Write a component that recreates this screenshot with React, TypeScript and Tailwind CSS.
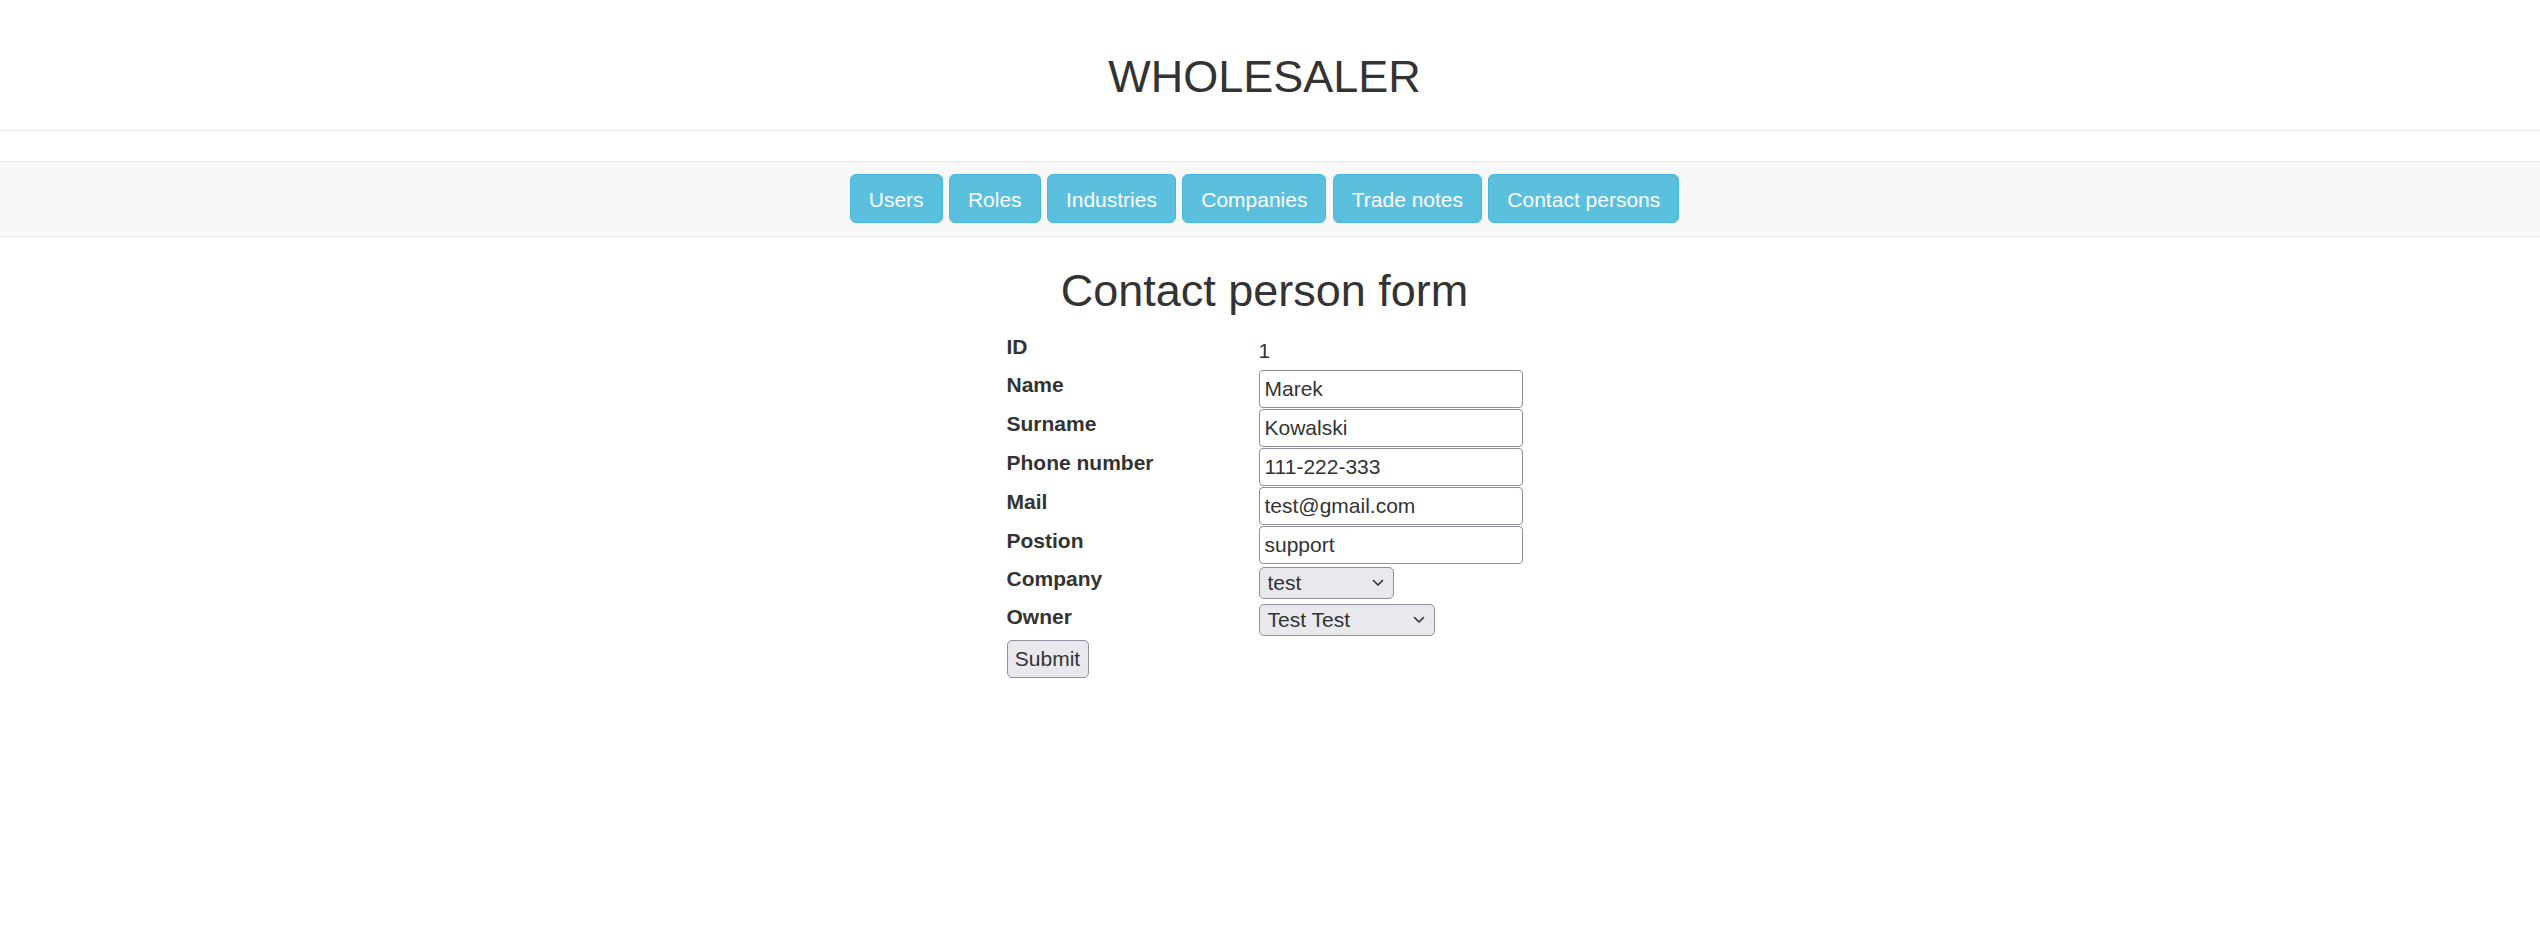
import { useState } from "react";

const navItems = ["Users", "Roles", "Industries", "Companies", "Trade notes", "Contact persons"];

const Chevron = () => (
  <svg width="12" height="8" viewBox="0 0 12 8" className="pointer-events-none absolute right-[10px] top-1/2 -translate-y-1/2">
    <path d="M1.5 1.5 L6 6 L10.5 1.5" fill="none" stroke="#333" strokeWidth="1.6" strokeLinecap="round" strokeLinejoin="round" />
  </svg>
);

const Row = ({ label, h, children }: { label: string; h: string; children: React.ReactNode }) => (
  <div className={`flex items-center ${h}`}>
    <div className="w-[252px] shrink-0">
      <label className="block font-bold leading-[30px] mb-[7.5px]">{label}</label>
    </div>
    <div className="flex-1">{children}</div>
  </div>
);

const App = () => {
  const [name, setName] = useState("Marek");
  const [surname, setSurname] = useState("Kowalski");
  const [phone, setPhone] = useState("111-222-333");
  const [mail, setMail] = useState("test@gmail.com");
  const [position, setPosition] = useState("support");
  const [company, setCompany] = useState("test");
  const [owner, setOwner] = useState("Test Test");

  const inputClass =
    "block w-[264px] h-[38px] px-[5px] text-[21px] leading-[30px] text-[#333] bg-white border border-[#8f8f9d] rounded-[4px] outline-none";

  return (
    <div className="min-h-screen bg-white text-[#333] text-[21px] font-['Liberation_Sans',Arial,sans-serif]">
      <header className="pt-[52px] pb-[28px] border-b border-[#eee] pr-[11px]">
        <h1 className="text-center text-[45px] leading-[50px] font-normal">WHOLESALER</h1>
      </header>

      <nav className="mt-[30px] border-y border-[#e7e7e7] bg-[#f8f8f8] h-[76px]">
        <div className="flex justify-center gap-[6.3px] pt-[12px] pr-[11px]">
          {navItems.map((item) => (
            <button
              key={item}
              className="h-[49px] px-[18px] pt-[2px] bg-[#5bc0de] border border-[#46b8da] rounded-[6px] text-white text-[21px] leading-[30px] cursor-pointer"
            >
              {item}
            </button>
          ))}
        </div>
      </nav>

      <main className="pr-[11px]">
        <h2 className="mt-[29px] mb-[16px] text-center text-[45px] leading-[49.5px] font-normal">Contact person form</h2>
        <form onSubmit={(e) => e.preventDefault()} className="w-[516px] mx-auto">
          <Row label="ID" h="h-[37.5px]">
            <span className="leading-[30px]">1</span>
          </Row>
          <Row label="Name" h="h-[39px]">
            <input value={name} onChange={(e) => setName(e.target.value)} className={inputClass} />
          </Row>
          <Row label="Surname" h="h-[39px]">
            <input value={surname} onChange={(e) => setSurname(e.target.value)} className={inputClass} />
          </Row>
          <Row label="Phone number" h="h-[39px]">
            <input value={phone} onChange={(e) => setPhone(e.target.value)} className={inputClass} />
          </Row>
          <Row label="Mail" h="h-[39px]">
            <input value={mail} onChange={(e) => setMail(e.target.value)} className={inputClass} />
          </Row>
          <Row label="Postion" h="h-[39px]">
            <input value={position} onChange={(e) => setPosition(e.target.value)} className={inputClass} />
          </Row>
          <Row label="Company" h="h-[37.5px]">
            <div className="relative w-[135px]">
              <select
                value={company}
                onChange={(e) => setCompany(e.target.value)}
                className="appearance-none block w-full h-[32px] pl-[8px] pr-[28px] text-[21px] leading-[28px] text-[#333] bg-[#e9e9ed] border border-[#8f8f9d] rounded-[5px] outline-none"
              >
                <option value="test">test</option>
              </select>
              <Chevron />
            </div>
          </Row>
          <Row label="Owner" h="h-[37.5px]">
            <div className="relative w-[176px]">
              <select
                value={owner}
                onChange={(e) => setOwner(e.target.value)}
                className="appearance-none block w-full h-[32px] pl-[8px] pr-[28px] text-[21px] leading-[28px] text-[#333] bg-[#e9e9ed] border border-[#8f8f9d] rounded-[5px] outline-none"
              >
                <option value="Test Test">Test Test</option>
              </select>
              <Chevron />
            </div>
          </Row>
          <button
            type="submit"
            className="mt-[0.5px] h-[38px] w-[82px] bg-[#e9e9ed] border border-[#8f8f9d] rounded-[5px] text-[21px] leading-[30px] text-[#333]"
          >
            Submit
          </button>
        </form>
      </main>
    </div>
  );
};

export default App;
